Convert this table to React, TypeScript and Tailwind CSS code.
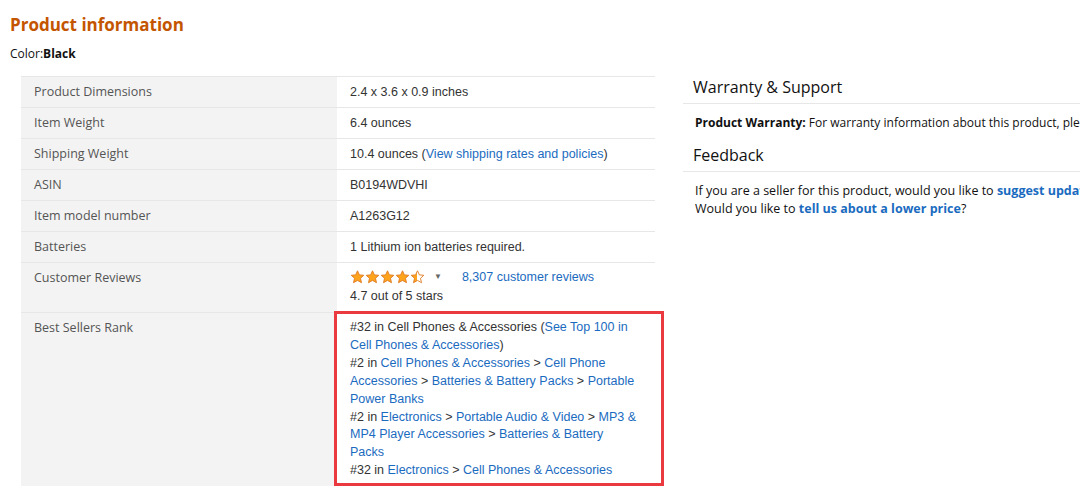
import React from "react";

const sans = "font-['Open_Sans','Noto_Sans',sans-serif]";
const arial = "font-['Liberation_Sans',Arial,sans-serif]";

function Star({ fill = "full" }: { fill?: "full" | "half" }) {
  const d =
    "M7 0.8 L8.9 4.9 L13.3 5.3 L10 8.3 L11 12.7 L7 10.4 L3 12.7 L4 8.3 L0.7 5.3 L5.1 4.9 Z";
  return (
    <svg width="15" height="14" viewBox="0 0 14 14" className="shrink-0">
      <defs>
        <linearGradient id="halfStar">
          <stop offset="50%" stopColor="#ffa41c" />
          <stop offset="50%" stopColor="#ffffff" />
        </linearGradient>
      </defs>
      <path
        d={d}
        fill={fill === "full" ? "#ffa41c" : "url(#halfStar)"}
        stroke="#de7921"
        strokeWidth="0.9"
        strokeLinejoin="round"
      />
    </svg>
  );
}

function A({ children }: { children: React.ReactNode }) {
  return <span className="text-[#1a6bc0]">{children}</span>;
}

const rows: { label: string; value: React.ReactNode }[] = [
  { label: "Product Dimensions", value: "2.4 x 3.6 x 0.9 inches" },
  { label: "Item Weight", value: "6.4 ounces" },
  {
    label: "Shipping Weight",
    value: (
      <>
        10.4 ounces (<A>View shipping rates and policies</A>)
      </>
    ),
  },
  { label: "ASIN", value: "B0194WDVHI" },
  { label: "Item model number", value: "A1263G12" },
  { label: "Batteries", value: "1 Lithium ion batteries required." },
];

export default function App() {
  return (
    <div className="w-[1080px] h-[489px] bg-white overflow-hidden flex">
      <div className="w-[683px] shrink-0 pl-[10px] pt-[14px]">
        <h1 className={`${sans} text-[17px] font-bold text-[#c45500] leading-[22px]`}>
          Product information
        </h1>
        <div className={`${sans} text-[12px] text-[#111] mt-[10px] leading-[16px]`}>
          Color:<span className="font-bold">Black</span>
        </div>

        <div className="ml-[11px] mt-[14px] w-[634px] relative">
          {rows.map((r) => (
            <div key={r.label} className="flex border-t border-[#e7e7e7] h-[31px]">
              <div
                className={`${sans} w-[316px] bg-[#f3f3f3] pl-[13px] text-[12.5px] text-[#555] flex items-center`}
              >
                {r.label}
              </div>
              <div
                className={`${arial} flex-1 pl-[13px] text-[12.5px] text-[#333] flex items-center`}
              >
                {r.value}
              </div>
            </div>
          ))}

          <div className="flex border-t border-[#e7e7e7] h-[50px]">
            <div
              className={`${sans} w-[316px] bg-[#f3f3f3] pl-[13px] pt-[6px] text-[12.5px] text-[#555]`}
            >
              Customer Reviews
            </div>
            <div className={`${arial} flex-1 pl-[13px] pt-[6px] text-[12.5px] text-[#333]`}>
              <div className="flex items-center h-[16px]">
                <div className="flex">
                  <Star />
                  <Star />
                  <Star />
                  <Star />
                  <Star fill="half" />
                </div>
                <span className="ml-[9px] text-[8px] text-[#666]">▼</span>
                <span className="ml-[20px] text-[#1a6bc0]">8,307 customer reviews</span>
              </div>
              <div className="mt-[3px] leading-[16px]">4.7 out of 5 stars</div>
            </div>
          </div>

          <div className="flex border-t border-[#e7e7e7] h-[174px]">
            <div
              className={`${sans} w-[316px] bg-[#f3f3f3] pl-[13px] pt-[6px] text-[12.5px] text-[#555]`}
            >
              Best Sellers Rank
            </div>
            <div
              className={`${arial} flex-1 pl-[13px] pr-[18px] pt-[6px] text-[12.5px] leading-[17.9px] text-[#333]`}
            >
              <div>
                #32 in Cell Phones &amp; Accessories (
                <A>See Top 100 in Cell Phones &amp; Accessories</A>)
              </div>
              <div>
                #2 in <A>Cell Phones &amp; Accessories</A> &gt; <A>Cell Phone Accessories</A>{" "}
                &gt; <A>Batteries &amp; Battery Packs</A> &gt; <A>Portable Power Banks</A>
              </div>
              <div>
                #2 in <A>Electronics</A> &gt; <A>Portable Audio &amp; Video</A> &gt;{" "}
                <A>MP3 &amp; MP4 Player Accessories</A> &gt; <A>Batteries &amp; Battery Packs</A>
              </div>
              <div>
                #32 in <A>Electronics</A> &gt; <A>Cell Phones &amp; Accessories</A>
              </div>
            </div>
          </div>

          <div className="absolute left-[313px] top-[235px] w-[330px] h-[175px] border-[3px] border-[#ea3a3f] pointer-events-none" />
        </div>
      </div>

      <div className="flex-1 pt-[76px]">
        <div className={`${sans} text-[16px] text-[#111] pl-[10px] h-[28px] leading-[22px] border-b border-[#e7e7e7]`}>
          Warranty &amp; Support
        </div>
        <div className={`${sans} text-[12px] text-[#111] pl-[12px] mt-[10px] whitespace-nowrap`}>
          <span className="font-bold">Product Warranty:</span> For warranty information about this
          product, please click here
        </div>
        <div className={`${sans} text-[16px] text-[#111] pl-[10px] mt-[12px] h-[28px] leading-[22px] border-b border-[#e7e7e7]`}>
          Feedback
        </div>
        <div className={`${sans} text-[12.5px] text-[#111] pl-[12px] mt-[10px] leading-[18px] whitespace-nowrap`}>
          <div>
            If you are a seller for this product, would you like to{" "}
            <span className="font-bold text-[#1a6bc0]">suggest updates through seller support</span>?
          </div>
          <div>
            Would you like to <span className="font-bold text-[#1a6bc0]">tell us about a lower price</span>?
          </div>
        </div>
      </div>
    </div>
  );
}
